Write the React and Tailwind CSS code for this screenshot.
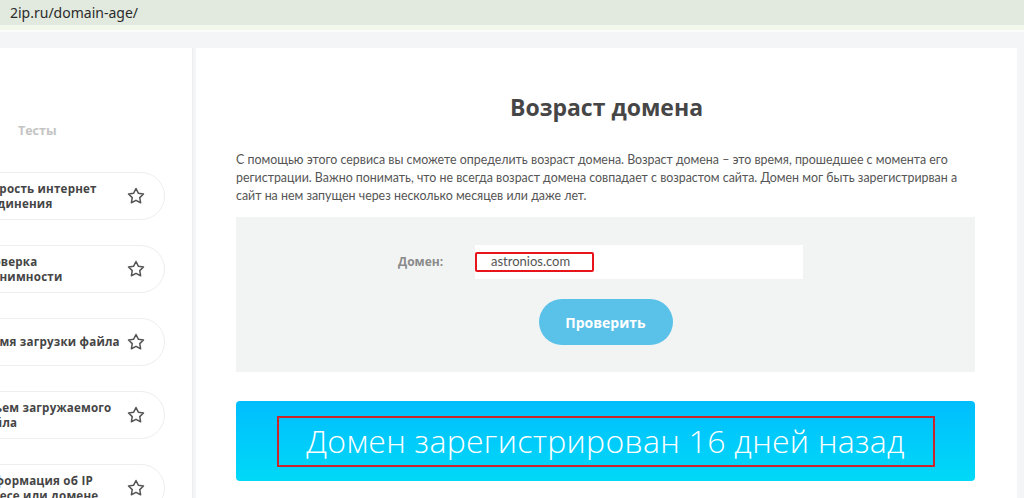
import React from 'react';
import { FiStar } from 'react-icons/fi';

const tests = [
  ['Скорость интернет', 'соединения'],
  ['Проверка', 'анонимности'],
  ['Время загрузки файла'],
  ['Объем загружаемого', 'файла'],
  ['Информация об IP', 'адресе или домене'],
];

function TestItem({ lines }) {
  return (
    <div className="flex items-center justify-between h-[48px] mb-[25px] pl-[32px] pr-[19px] bg-white border border-[#eeeeee] rounded-full">
      <div className="text-[11.6px] leading-[15px] font-bold text-[#454545] tracking-[0.2px]">
        {lines.map((l, i) => <div key={i} className="whitespace-nowrap">{l}</div>)}
      </div>
      <FiStar className="text-[#555] shrink-0" size="18px" />
    </div>
  );
}

export default function App() {
  return (
    <div className="w-[1024px] h-[498px] overflow-hidden bg-[#f4f5f7] font-['Open_Sans',sans-serif]">
      {/* browser address bar */}
      <div className="h-[25px] bg-[#e2e9de] flex items-center pl-[10px] text-[14px] text-[#2b2b2b] font-['Noto_Sans',sans-serif]">
        2ip.ru/domain-age/
      </div>
      <div className="h-[5px] bg-[#f3f8ec]" />
      <div className="h-[2px] bg-[#fafbfa]" />

      <div className="flex gap-[3px] pt-[16px] h-[466px]">
        {/* sidebar */}
        <aside className="w-[193px] shrink-0 bg-white border-r border-[#ededed] overflow-hidden">
          <div className="pt-[74px] pl-[18px] text-[12.5px] font-bold text-[#c4c4c4]">Тесты</div>
          <div className="mt-[31px] -ml-[56px] w-[221px]">
            {tests.map((t, i) => <TestItem key={i} lines={t} />)}
          </div>
        </aside>

        {/* main panel */}
        <main className="w-[821px] bg-white px-[40px]">
          <h1 className="pt-[44px] text-center text-[23px] font-bold text-[#464646] leading-[30px]">
            Возраст домена
          </h1>
          <p className="mt-[29px] text-[12.4px] leading-[18px] text-[#555] font-['Lato',sans-serif]">
            С помощью этого сервиса вы сможете определить возраст домена. Возраст домена – это время, прошедшее с момента его регистрации. Важно понимать, что не всегда возраст домена совпадает с возрастом сайта. Домен мог быть зарегистрирван а сайт на нем запущен через несколько месяцев или даже лет.
          </p>

          <div className="mt-[12px] w-[739px] h-[155px] bg-[#f2f4f4] flex flex-col items-center pt-[28px]">
            <div className="flex items-center ml-[-10px]">
              <span className="w-[77px] text-[12px] font-bold text-[#8a8a8a]">Домен:</span>
              <div className="w-[328px] h-[34px] bg-white flex items-center">
                <div className="w-[119px] h-[20px] border-2 border-[#e8141b] rounded-[2px] flex items-center pl-[14px] text-[13px] text-[#555] font-['Lato',sans-serif]">
                  astronios.com
                </div>
              </div>
            </div>
            <button className="mt-[20px] w-[134px] h-[46px] rounded-full bg-[#5ac1e8] text-white text-[14px] font-bold">
              Проверить
            </button>
          </div>

          <div className="mt-[29px] w-[739px] h-[80px] rounded-[4px] bg-gradient-to-b from-[#00bdfe] to-[#00d9f7] flex items-center justify-center">
            <div className="w-[658px] h-[51px] border-2 border-[#c9252c] flex items-center justify-center text-white text-[32px] font-light tracking-[0.3px]">
              Домен зарегистрирован 16 дней назад
            </div>
          </div>
        </main>
      </div>
    </div>
  );
}
